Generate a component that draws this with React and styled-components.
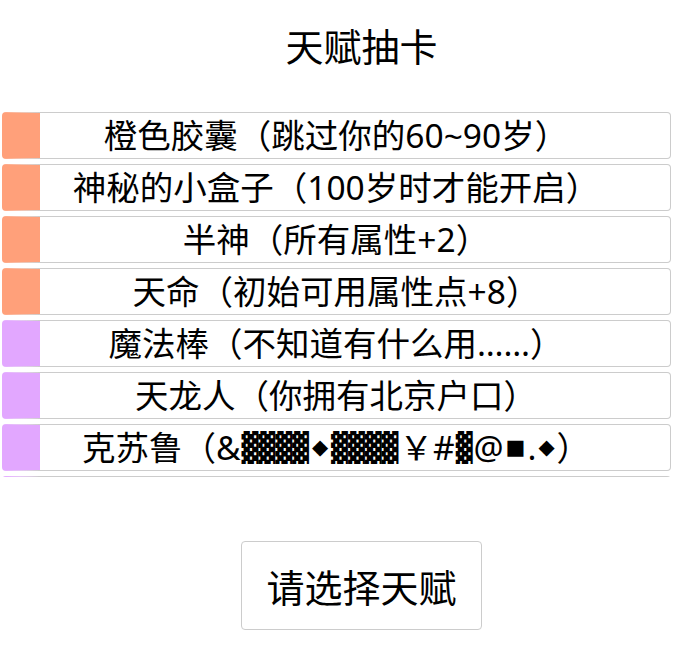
import React from "react";
import styled, { createGlobalStyle } from "styled-components";

const GlobalStyle = createGlobalStyle`
  html, body {
    margin: 0;
    padding: 0;
    background: #fff;
  }
  body {
    font-family: "Noto Sans CJK SC", "Noto Sans", sans-serif;
    color: #000;
  }
`;

const gradeColors = {
  2: "#e2a7ff",
  3: "#ffa07a",
};

const talents = [
  { id: 1, grade: 3, name: "橙色胶囊", desc: "跳过你的60~90岁" },
  { id: 2, grade: 3, name: "神秘的小盒子", desc: "100岁时才能开启" },
  { id: 3, grade: 3, name: "半神", desc: "所有属性+2" },
  { id: 4, grade: 3, name: "天命", desc: "初始可用属性点+8" },
  { id: 5, grade: 2, name: "魔法棒", desc: "不知道有什么用……" },
  { id: 6, grade: 2, name: "天龙人", desc: "你拥有北京户口" },
  { id: 7, grade: 2, name: "克苏鲁", desc: "&▓▓▓▓◆▓▓▓▓￥#▓@■.◆" },
  { id: 8, grade: 2, name: "祖传药丸", desc: "死亡率下降" },
  { id: 9, grade: 2, name: "网瘾少年", desc: "智力+2，体质-2" },
];

const Page = styled.div`
  display: flex;
  flex-direction: column;
  width: 698px;
  height: 671px;
  overflow: hidden;
`;

const Title = styled.h1`
  margin: 20px 0 0 25px;
  font-size: 38px;
  font-weight: 400;
  line-height: 50px;
  text-align: center;
`;

const TalentList = styled.ul`
  list-style: none;
  margin: 42px 27px 0 2px;
  padding: 0;
  height: 365px;
  overflow-y: auto;
  scrollbar-width: none;
  display: flex;
  flex-direction: column;
  gap: 5px;
`;

const TalentItem = styled.li`
  flex: none;
  box-sizing: border-box;
  height: 47px;
  display: flex;
  align-items: center;
  justify-content: center;
  border: 1px solid #ccc;
  border-left: 38px solid ${(props) => props.color};
  border-radius: 4px;
  padding-right: 38px;
  font-family: "Noto Sans", "Noto Sans CJK SC", sans-serif;
  font-size: 33.5px;
  line-height: 45px;
  white-space: nowrap;
`;

const Shade = styled.span`
  font-family: "DejaVu Sans Mono", monospace;
  font-size: 28px;
  margin: 0 1px;
`;

const Mark = styled.span`
  font-family: "DejaVu Sans", sans-serif;
  font-size: 21px;
  margin: 0 2px;
`;

const Button = styled.button`
  box-sizing: border-box;
  width: 241px;
  height: 89px;
  background: #fff;
  border: 1px solid #ccc;
  border-radius: 4px;
  font-family: "Noto Sans CJK SC", "Noto Sans", sans-serif;
  font-size: 38px;
  color: #000;
  cursor: pointer;
`;

const Footer = styled.div`
  display: flex;
  justify-content: center;
  padding-left: 25px;
  margin-top: 64px;
`;

// split the garbled text so the shade and mark glyphs get their own font
const renderDesc = (text) =>
  text.split(/([▓]+|[◆■])/).map((part, i) => {
    if (!part) return null;
    if (part[0] === "▓") return <Shade key={i}>{part}</Shade>;
    if (part === "◆" || part === "■") return <Mark key={i}>{part}</Mark>;
    return <React.Fragment key={i}>{part}</React.Fragment>;
  });

export default function App() {
  return (
    <Page>
      <GlobalStyle />
      <Title>天赋抽卡</Title>
      <TalentList>
        {talents.map((t) => (
          <TalentItem key={t.id} color={gradeColors[t.grade]}>
            {t.name}（{renderDesc(t.desc)}）
          </TalentItem>
        ))}
      </TalentList>
      <Footer>
        <Button>请选择天赋</Button>
      </Footer>
    </Page>
  );
}
